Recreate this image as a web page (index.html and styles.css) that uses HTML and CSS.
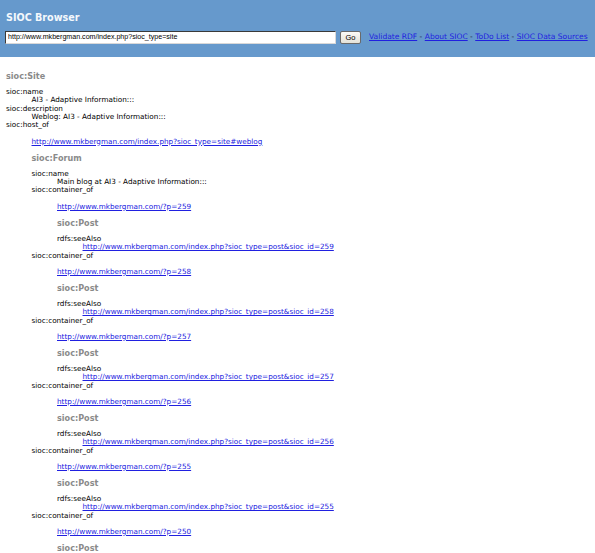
FILE: index.html
```html
<!DOCTYPE html>
<html>
<head>
<meta charset="utf-8">
<title>SIOC Browser</title>
<link rel="stylesheet" href="styles.css">
</head>
<body>
<header class="top">
  <h1 class="title">SIOC Browser</h1>
  <form class="bar">
    <input class="url" type="text" value="http://www.mkbergman.com/index.php?sioc_type=site">
    <button class="go" type="button">Go</button>
    <nav class="links"><a href="#">Validate RDF</a> - <a href="#">About SIOC</a> - <a href="#">ToDo List</a> - <a href="#">SIOC Data Sources</a></nav>
  </form>
</header>
<main class="content">
  <h2 class="type">sioc:Site</h2>
  <div class="prop">sioc:name</div>
  <div class="val">AI3 - Adaptive Information:::</div>
  <div class="prop">sioc:description</div>
  <div class="val">Weblog: AI3 - Adaptive Information:::</div>
  <div class="prop">sioc:host_of</div>
  <div class="obj">
    <a class="uri" href="#">http://www.mkbergman.com/index.php?sioc_type=site#weblog</a>
    <h2 class="type">sioc:Forum</h2>
    <div class="prop">sioc:name</div>
    <div class="val">Main blog at AI3 - Adaptive Information:::</div>

    <div class="prop">sioc:container_of</div>
    <div class="obj">
      <a class="uri" href="#">http://www.mkbergman.com/?p=259</a>
      <h2 class="type">sioc:Post</h2>
      <div class="prop">rdfs:seeAlso</div>
      <div class="val"><a href="#">http://www.mkbergman.com/index.php?sioc_type=post&amp;sioc_id=259</a></div>
    </div>

    <div class="prop">sioc:container_of</div>
    <div class="obj">
      <a class="uri" href="#">http://www.mkbergman.com/?p=258</a>
      <h2 class="type">sioc:Post</h2>
      <div class="prop">rdfs:seeAlso</div>
      <div class="val"><a href="#">http://www.mkbergman.com/index.php?sioc_type=post&amp;sioc_id=258</a></div>
    </div>

    <div class="prop">sioc:container_of</div>
    <div class="obj">
      <a class="uri" href="#">http://www.mkbergman.com/?p=257</a>
      <h2 class="type">sioc:Post</h2>
      <div class="prop">rdfs:seeAlso</div>
      <div class="val"><a href="#">http://www.mkbergman.com/index.php?sioc_type=post&amp;sioc_id=257</a></div>
    </div>

    <div class="prop">sioc:container_of</div>
    <div class="obj">
      <a class="uri" href="#">http://www.mkbergman.com/?p=256</a>
      <h2 class="type">sioc:Post</h2>
      <div class="prop">rdfs:seeAlso</div>
      <div class="val"><a href="#">http://www.mkbergman.com/index.php?sioc_type=post&amp;sioc_id=256</a></div>
    </div>

    <div class="prop">sioc:container_of</div>
    <div class="obj">
      <a class="uri" href="#">http://www.mkbergman.com/?p=255</a>
      <h2 class="type">sioc:Post</h2>
      <div class="prop">rdfs:seeAlso</div>
      <div class="val"><a href="#">http://www.mkbergman.com/index.php?sioc_type=post&amp;sioc_id=255</a></div>
    </div>

    <div class="prop">sioc:container_of</div>
    <div class="obj">
      <a class="uri" href="#">http://www.mkbergman.com/?p=250</a>
      <h2 class="type">sioc:Post</h2>
    </div>
  </div>
</main>
</body>
</html>
```

FILE: styles.css
```css
html, body {
  margin: 0;
  padding: 0;
  background: #ffffff;
}

body {
  font-family: "DejaVu Sans", Verdana, sans-serif;
  font-size: 7.25px;
  line-height: 8.33px;
  color: #000;
}

.top {
  background: #6699cc;
  height: 57px;
  box-sizing: border-box;
  padding: 12px 0 0 6px;
}

.title {
  margin: 0;
  font-size: 9.6px;
  line-height: 12px;
  font-weight: bold;
  color: #f4f8fc;
}

.bar {
  display: flex;
  align-items: center;
  margin: 7px 0 0 -1px;
  height: 13px;
}

.url {
  box-sizing: border-box;
  width: 331px;
  height: 13px;
  margin: 0;
  padding: 0 2px 1px;
  border: 1px solid;
  border-color: #3a3a3a #d8d8d8 #d8d8d8 #3a3a3a;
  background: #fff;
  font-family: "Liberation Sans", Arial, sans-serif;
  font-size: 7.1px;
  line-height: 10px;
  color: #000;
  outline: none;
}

.go {
  box-sizing: border-box;
  width: 21px;
  height: 13px;
  margin: 0 0 0 4px;
  padding: 0;
  border: 1px solid #6a6a6a;
  border-radius: 2px;
  background: linear-gradient(#fbfbf8, #e4e2d8);
  font-family: "Liberation Sans", Arial, sans-serif;
  font-size: 7.5px;
  line-height: 11px;
  color: #000;
}

.links {
  margin-left: 8px;
  font-size: 7.55px;
  color: #1a1a3a;
  white-space: nowrap;
}

a {
  color: #2020e0;
  text-decoration: underline;
}

.content {
  padding: 7px 0 0 6px;
}

.type {
  margin: 7.8px 0;
  font-size: 8.1px;
  line-height: 8.33px;
  font-weight: bold;
  color: #8a8a8a;
}

.content > .type:first-child {
  margin-top: 8px;
}

.prop {
  white-space: nowrap;
}

.val {
  margin-left: 25.5px;
  white-space: nowrap;
}

.obj {
  margin-left: 25.5px;
  padding-top: 7.8px;
}

.uri {
  display: block;
  width: max-content;
}
```
